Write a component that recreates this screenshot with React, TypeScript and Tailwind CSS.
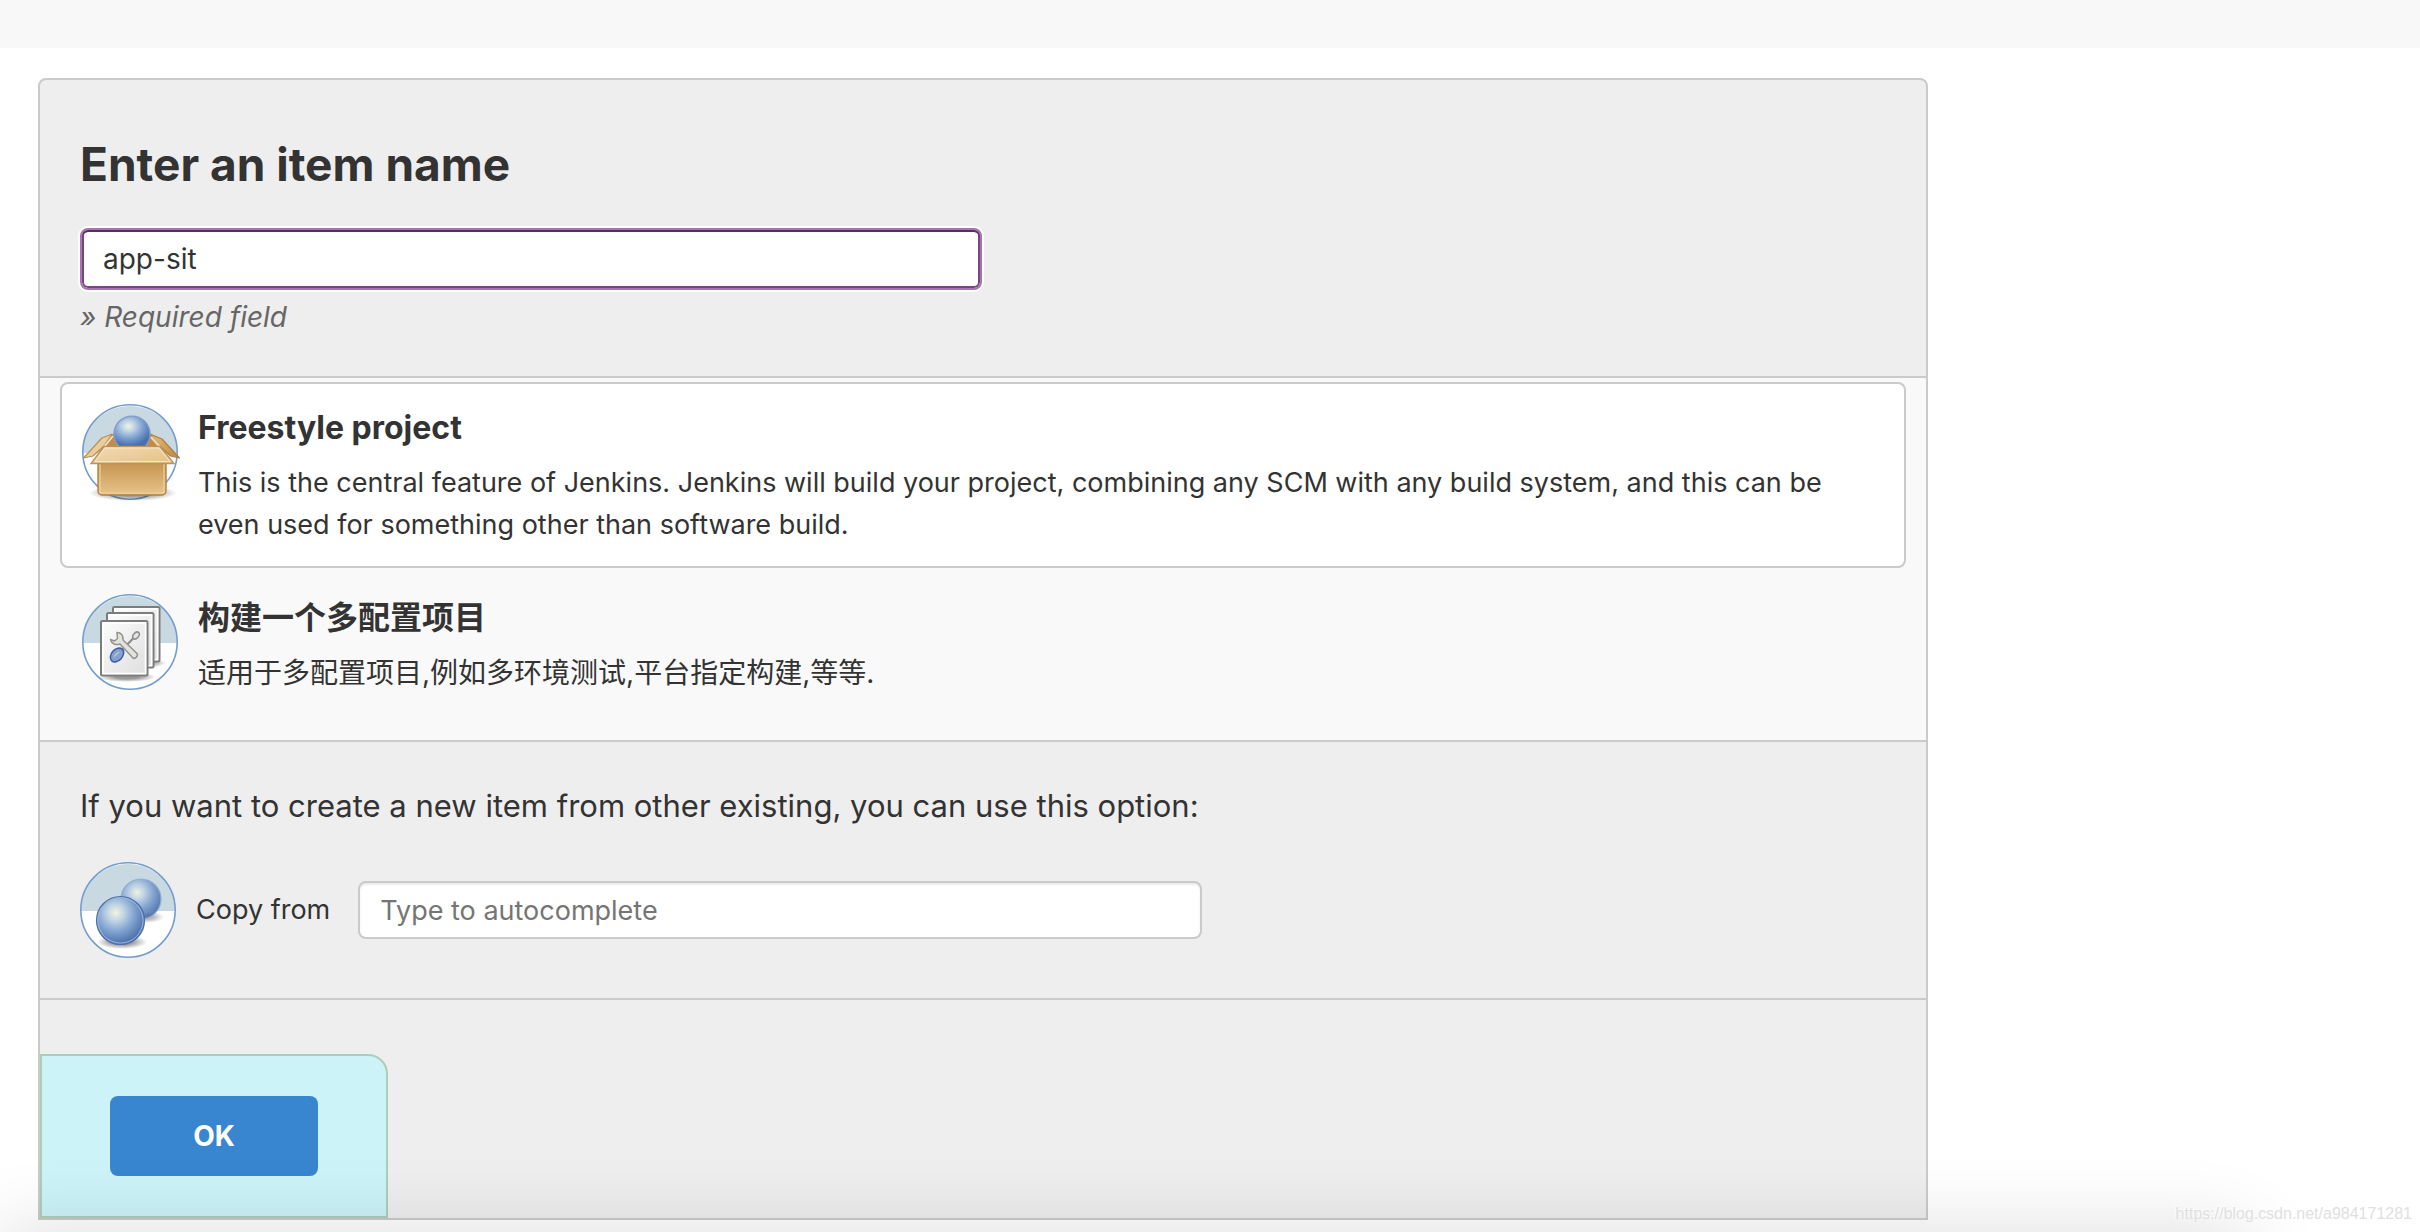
import { useState, type ReactNode } from "react";

type ItemType = {
	id: string;
	title: string;
	description: string;
	textSize: string;
	icon: ReactNode;
};

// round frame shared by every item icon
function IconFrame({ id, children }: { id: string; children: ReactNode }) {
	return (
		<svg viewBox="0 0 96 96" className="block size-24 shrink-0 overflow-visible" aria-hidden="true">
			<defs>
				<radialGradient id={`${id}-ball`} cx="0.4" cy="0.34" r="0.66">
					<stop offset="0" stopColor="#f2f4e2" />
					<stop offset="0.25" stopColor="#c3d6e4" />
					<stop offset="0.6" stopColor="#7fa2d0" />
					<stop offset="1" stopColor="#4a6fa9" />
				</radialGradient>
				<radialGradient id={`${id}-shade`}>
					<stop offset="0.4" stopColor="#000" stopOpacity="0.4" />
					<stop offset="1" stopColor="#000" stopOpacity="0" />
				</radialGradient>
			</defs>
			<circle cx="48" cy="48" r="47" fill="#fff" />
			<path d="M1 49a47 47 0 1 1 94 0z" fill="#c9d9e1" />
			<circle cx="48" cy="48" r="47.2" fill="none" stroke="#739dce" strokeWidth="1.6" />
			{children}
		</svg>
	);
}

function BoxIcon() {
	return (
		<IconFrame id="box">
			<defs>
				<linearGradient id="box-front" x1="0" y1="0" x2="0" y2="1">
					<stop offset="0" stopColor="#c4924c" />
					<stop offset="1" stopColor="#e8c48a" />
				</linearGradient>
				<linearGradient id="box-flap" x1="0" y1="0" x2="1" y2="1">
					<stop offset="0" stopColor="#f0dcb8" />
					<stop offset="1" stopColor="#e6c080" />
				</linearGradient>
				<linearGradient id="box-side" x1="0" y1="0" x2="1" y2="1">
					<stop offset="0" stopColor="#e2bd80" />
					<stop offset="1" stopColor="#bd8742" />
				</linearGradient>
			</defs>
			<ellipse cx="51" cy="89" rx="44" ry="8" fill="url(#box-shade)" />
			<path d="M30 30h38l9 13H22z" fill="#c08d49" />
			<path d="M30 30 20 34 1.5 54 11 52l11-10z" fill="url(#box-flap)" stroke="#b98f55" strokeWidth="1.2" strokeLinejoin="round" />
			<path d="M68 30 80 35l17.5 19-9-2-11-10z" fill="url(#box-side)" stroke="#b0803f" strokeWidth="1.2" strokeLinejoin="round" />
			<path d="M69 33l9 10" stroke="#f0dcb8" strokeWidth="2" />
			<path d="M31 32 22 43" stroke="#f6e6c9" strokeWidth="1.6" />
			<path d="M36.5 42a18 18 0 1 1 27 0z" fill="url(#box-ball)" />
			<path d="M36.5 42a18 18 0 1 1 27 0" fill="none" stroke="#7f9ccd" strokeWidth="1.4" />
			<path d="M16 57h68v30a4 4 0 0 1-4 4H20a4 4 0 0 1-4-4z" fill="url(#box-front)" stroke="#b58141" strokeWidth="1.4" />
			<path d="M18 60v27a2 2 0 0 0 2 2h60a2 2 0 0 0 2-2V60" fill="none" stroke="#edd2a2" strokeWidth="1.2" />
			<path d="M22 42.5h56l14 17H9z" fill="url(#box-flap)" stroke="#bd9359" strokeWidth="1.4" />
			<path d="M23 44h54l11 13.5H13z" fill="none" stroke="#f6e6c9" strokeWidth="1" />
		</IconFrame>
	);
}

function PagesIcon() {
	return (
		<IconFrame id="pages">
			<defs>
				<linearGradient id="pages-paper" x1="0" y1="0" x2="1" y2="1">
					<stop offset="0" stopColor="#fdfdfd" />
					<stop offset="1" stopColor="#dedede" />
				</linearGradient>
			</defs>
			<ellipse cx="60" cy="69" rx="24" ry="5" fill="url(#pages-shade)" />
			<ellipse cx="45" cy="83" rx="29" ry="5" fill="url(#pages-shade)" />
			{[
				[31, 13],
				[25, 19],
				[19, 27],
			].map(([x, y]) => (
				<g key={x}>
					<rect x={x} y={y} width="46.5" height="54.5" rx="1.5" fill="url(#pages-paper)" stroke="#7c7c7c" strokeWidth="2" />
					<rect x={x + 2} y={y + 2} width="42.5" height="50.5" fill="none" stroke="#fff" strokeWidth="1.6" />
				</g>
			))}
			<path d="M52 43.5 40 56" stroke="#8d8d8d" strokeWidth="2.2" />
			<ellipse cx="54" cy="41.5" rx="2.6" ry="4" transform="rotate(40 54 41.5)" fill="#e4e4e4" stroke="#8d8d8d" strokeWidth="1.5" />
			<path
				d="M35 38.5c4 0 6.5 3 6 7.500L55 59.500c1.500 2-1.500 6-4 4.500L38 50c-4 1.500-8.500 0-9.500-4.500l4 1.500 3-2.500z"
				fill="#e2e2e0"
				stroke="#96938d"
				strokeWidth="1.5"
				strokeLinejoin="round"
			/>
			<ellipse cx="35" cy="61" rx="5.5" ry="7.8" transform="rotate(42 35 61)" fill="#86a1cb" stroke="#3f61a2" strokeWidth="1.6" />
			<path d="M32 62.5 37 58" stroke="#b7c9e4" strokeWidth="1.4" />
		</IconFrame>
	);
}

function CopyIcon() {
	return (
		<IconFrame id="copy">
			<ellipse cx="66" cy="55" rx="18" ry="6" fill="url(#copy-shade)" opacity="0.7" />
			<ellipse cx="42" cy="80" rx="25" ry="7" fill="url(#copy-shade)" />
			<circle cx="61" cy="37" r="20" fill="url(#copy-ball)" stroke="#8ba7d3" strokeWidth="1.2" opacity="0.9" />
			<circle cx="40.5" cy="58.5" r="24" fill="url(#copy-ball)" stroke="#4b6fae" strokeWidth="1.2" />
			<circle cx="40.5" cy="58.5" r="22.6" fill="none" stroke="#9db9de" strokeWidth="1" />
		</IconFrame>
	);
}

const itemTypes: ItemType[] = [
	{
		id: "freestyle",
		title: "Freestyle project",
		description:
			"This is the central feature of Jenkins. Jenkins will build your project, combining any SCM with any build system, and this can be even used for something other than software build.",
		textSize: "text-[27px]",
		icon: <BoxIcon />,
	},
	{
		id: "matrix",
		title: "构建一个多配置项目",
		description: "适用于多配置项目,例如多环境测试,平台指定构建,等等.",
		textSize: "text-[28px]",
		icon: <PagesIcon />,
	},
];

function App() {
	const [name, setName] = useState("app-sit");
	const [selected, setSelected] = useState("freestyle");

	return (
		<div className="relative min-h-screen bg-white font-['Inter','Noto_Sans_CJK_SC',sans-serif] text-[27px] leading-[42px] text-[#333]">
			<header className="h-12 bg-[#f8f8f8]" />
			<main className="px-[38px] pt-[30px] pb-3">
				<form className="max-w-[1890px] rounded-t-lg border-2 border-[#cacaca] bg-[#eee]" onSubmit={e => e.preventDefault()}>
					<div className="border-b-2 border-[#cacaca] px-10 pt-14 pb-[38px]">
						<label htmlFor="name" className="block text-[46px] leading-14 font-bold">Enter an item name</label>
						<input
							id="name"
							type="text"
							value={name}
							onChange={e => setName(e.target.value)}
							className="mt-9 block h-[62px] w-full max-w-[902px] rounded-lg border-2 border-[#a676ae] bg-white px-[21px] text-[28px] shadow-[0_0_0_2px_#fff,inset_0_2px_0_0_#5b2a64,inset_0_0_0_2px_#7a4483] outline-none"
						/>
						<p className="mt-[6px] text-[28px] text-[#666] italic">» Required field</p>
					</div>

					<div className="border-b-2 border-[#cacaca] bg-[#f9f9f9] px-5 pt-1 pb-5">
						{itemTypes.map(item => (
							<label
								key={item.id}
								className={`relative mb-1 flex gap-5 rounded-lg border-2 p-5 ${selected === item.id ? "border-[#cacaca] bg-white" : "border-transparent"}`}
							>
								<input
									type="radio"
									name="mode"
									className="sr-only"
									checked={selected === item.id}
									onChange={() => setSelected(item.id)}
								/>
								{item.icon}
								<span className="block">
									<span className="block text-[32px] leading-12 font-bold">{item.title}</span>
									<span className={`mt-[10px] block ${item.textSize}`}>{item.description}</span>
								</span>
							</label>
						))}
					</div>

					<div className="border-b-2 border-[#cacaca] p-10">
						<p className="text-[31px] leading-12">If you want to create a new item from other existing, you can use this option:</p>
						<div className="mt-8 flex items-center gap-5">
							<CopyIcon />
							<label htmlFor="from" className="mr-2 whitespace-nowrap">Copy from</label>
							<input
								id="from"
								type="text"
								placeholder="Type to autocomplete"
								className="h-[58px] w-full max-w-[844px] rounded-lg border-2 border-[#cacaca] bg-white px-5 shadow-[inset_0_2px_2px_rgba(0,0,0,0.075)] outline-none placeholder:text-[#757575]"
							/>
						</div>
					</div>

					<div className="flex pt-[54px]">
						<div className="rounded-tr-[20px] border-2 border-[#adcdbb] bg-[#cbf3f8] px-[68px] py-10">
							<button type="submit" className="block h-20 w-52 rounded-lg bg-[#3886d0] text-[28px] font-bold text-white">OK</button>
						</div>
					</div>
				</form>
			</main>

			{/* soft shadow along the bottom edge */}
			<div className="pointer-events-none absolute inset-x-0 bottom-0 h-24 overflow-hidden">
				<div className="mt-24 mr-[172px] h-48 shadow-[0_0_80px_rgba(0,0,0,0.14)]" />
			</div>
			<p className="absolute right-2 bottom-1.5 font-['Liberation_Sans',sans-serif] text-base leading-6 text-[#e0e0e0] [text-shadow:-1px_-1px_0_#fff]">
				https://blog.csdn.net/a984171281
			</p>
		</div>
	);
}

export default App;
